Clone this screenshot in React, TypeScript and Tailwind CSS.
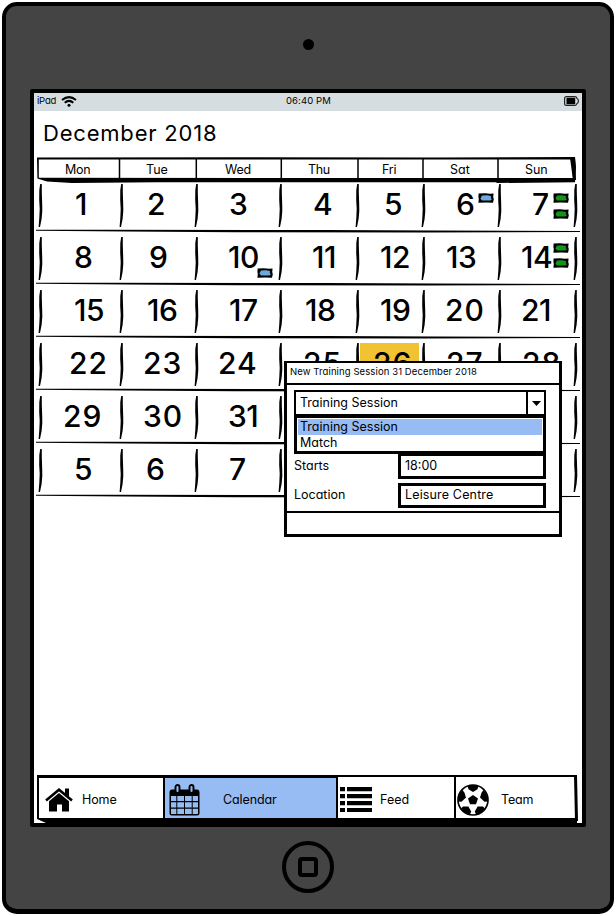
import React from "react";

type Day = { n: string; pad: number; tight?: boolean; today?: boolean };

const COLS = "grid grid-cols-[81px_75px_84px_77px_66px_76px_76px_8px]";

const d = (n: string, pad: number, tight = false, today = false): Day => ({ n, pad, tight, today });

const WEEKS: Day[][] = [
  [d("1", 38), d("2", 29), d("3", 36), d("4", 36), d("5", 30), d("6", 36), d("7", 36)],
  [d("8", 37), d("9", 31), d("10", 35, true), d("11", 35, true), d("12", 26, true), d("13", 26, true), d("14", 25, true)],
  [d("15", 37, true), d("16", 29, true), d("17", 36, true), d("18", 28, true), d("19", 26, true), d("20", 25), d("21", 25, true)],
  [d("22", 32), d("23", 25), d("24", 25), d("25", 26), d("26", 19, false, true), d("27", 26), d("28", 26)],
  [d("29", 26), d("30", 25), d("31", 35, true), d("", 0), d("", 0), d("", 0), d("", 0)],
  [d("5", 37), d("6", 28), d("7", 36), d("", 0), d("", 0), d("", 0), d("", 0)],
];

const MARKS: Record<string, { color: string; place: string }[]> = {
  "0-5": [{ color: "#6fa8dc", place: "left-[58px] top-[14px]" }],
  "0-6": [
    { color: "#109618", place: "left-[57px] top-[14px]" },
    { color: "#109618", place: "left-[57px] top-[30px]" },
  ],
  "1-2": [{ color: "#6fa8dc", place: "left-[64px] top-[36px]" }],
  "1-6": [
    { color: "#109618", place: "left-[57px] top-[11px]" },
    { color: "#109618", place: "left-[57px] top-[26px]" },
  ],
};

function Stroke() {
  return (
    <svg className="mt-[5px] h-[43px] w-[6px] shrink-0" viewBox="0 0 6 43">
      <path d="M3.2 0 L4.8 0 L4.8 8 L5.2 20 L5.3 27 L4.6 35 L3 43 L1.6 43 L2.3 34 L2.7 25 L2.2 16 L2.3 6 Z" />
    </svg>
  );
}

function Mark({ color, place }: { color: string; place: string }) {
  return (
    <svg className={`absolute h-[11px] w-[17px] ${place}`} viewBox="0 0 17 11">
      <path d="M0.6 0.4 L7 0.2 L12 0.8 L15.6 0.6 L15.2 4 L15.8 6.2 L15 9.8 L8 9.6 L0.4 9.8 L0.8 6 L0.4 4 Z" />
      <path d="M4 2.6 L9 2.2 L13 3 L12.8 5 L13.8 6.6 L12.4 7.6 L8 7.4 L4 7.6 L2.4 5.4 Z" fill={color} />
    </svg>
  );
}

function RowLine() {
  return (
    <svg className="absolute bottom-[-1px] left-[-1px] h-[4px] w-[544px]" viewBox="0 0 544 4" preserveAspectRatio="none">
      <path d="M0 0.8 L70 0.7 L290 1 L400 1.6 L544 2 L544 3.1 L390 3.5 L200 3.2 L90 2.5 L0 1.7 Z" />
    </svg>
  );
}

function Calendar() {
  return (
    <div className="ml-[3px] w-[543px]">
      <div className="relative flex h-[26px] w-[539px] text-[12.5px] leading-[22px]">
        <svg className="absolute left-0 top-0 h-[26px] w-[539px]" viewBox="0 0 539 26">
          <path
            fillRule="evenodd"
            d="M0 0.4 L200 0.2 L400 0.6 L538 0 L539 10 L538 25.2 L460 26 L459 25.3 L120 25.3 L35 26 L10 24.6 L0.4 21.6 Z M1.8 2.4 L1.8 20.8 L536 21 L534.5 2.4 Z"
          />
          <path d="M533 1 L538 1 L539 23 L536 23 Z" />
          <path d="M82.5 1V22M159.3 1V22M244.3 1V22M321 1V22M386 1V22M461 1V22" stroke="#000" strokeWidth="1.5" />
        </svg>
        <span className="w-[82px] pl-[28px] pt-[2px] tracking-[-0.3px]">Mon</span>
        <span className="w-[77px] pl-[27px] pt-[2px]">Tue</span>
        <span className="w-[85px] pl-[29px] pt-[2px] tracking-[-0.2px]">Wed</span>
        <span className="w-[77px] pl-[27px] pt-[2px] tracking-[-0.3px]">Thu</span>
        <span className="w-[65px] pl-[24px] pt-[2px] tracking-[-0.2px]">Fri</span>
        <span className="w-[75px] pl-[27px] pt-[2px]">Sat</span>
        <span className="w-[78px] pl-[27px] pt-[2px] tracking-[-0.1px]">Sun</span>
      </div>
      <div className="-mt-[4px]">
        {WEEKS.map((week, r) => (
          <div key={r} className={`relative h-[53px] ${COLS}`}>
            {week.map((day, c) => (
              <div key={c} className="relative flex">
                <Stroke />
                {day.today && <span className="absolute left-[6px] top-[5px] h-[44px] w-[59px] bg-[#f1c232]" />}
                <span
                  className={`relative mt-[6px] -ml-[6px] whitespace-nowrap text-[30px] font-medium leading-[38px] ${day.tight ? "tracking-[-0.5px]" : "tracking-[1px]"}`}
                  style={{ paddingLeft: day.pad }}
                >
                  {day.n}
                </span>
                {(MARKS[`${r}-${c}`] || []).map((m, i) => (
                  <Mark key={i} {...m} />
                ))}
              </div>
            ))}
            <Stroke />
            <RowLine />
          </div>
        ))}
      </div>
    </div>
  );
}

function Dialog() {
  return (
    <div className="absolute left-[250px] top-[268px] flex h-[176px] w-[278px] flex-col border-[3px] border-t-2 border-black bg-white">
      <div className="h-[22px] border-b-2 border-black pl-[3px] text-[9.5px] leading-[18px] tracking-[0.1px]">
        New Training Session 31 December 2018
      </div>
      <div className="relative h-[126px] px-[7px] pt-[5px] text-[12.5px] tracking-[0px]">
        <div className="flex h-[26px] w-[252px] border-2 border-black">
          <span className="flex-1 pl-[4px] leading-[21px]">Training Session</span>
          <span className="flex w-[18px] items-center justify-center border-l-2 border-black">
            <svg className="h-[5px] w-[9px]" viewBox="0 0 9 5">
              <path d="M0 0H9L4.5 5Z" />
            </svg>
          </span>
        </div>
        <div className="h-[38px] w-[252px] border-[3px] border-t-2 border-black px-px pt-px leading-[16px]">
          <div className="h-[16px] bg-[#97bbf3] pl-[2px]">Training Session</div>
          <div className="pl-[2px]">Match</div>
        </div>
        <div className="flex h-[25px] w-[252px] leading-[23px]">
          <span className="w-[104px]">Starts</span>
          <span className="w-[148px] border-[3px] border-t-2 border-black pl-[4px] leading-[20px]">18:00</span>
        </div>
        <div className="mt-[4px] flex h-[25px] w-[252px] leading-[23px]">
          <span className="w-[104px]">Location</span>
          <span className="w-[148px] border-[3px] border-black pl-[4px] leading-[18px] tracking-[0.15px]">Leisure Centre</span>
        </div>
      </div>
      <div className="flex-1 border-t-2 border-black" />
    </div>
  );
}

function HomeIcon() {
  return (
    <svg className="h-[24px] w-[28px]" viewBox="0 0 28 24">
      <path d="M1 12.4 L14 1.8 L27 12.4" fill="none" stroke="#000" strokeWidth="2.6" />
      <path d="M20 0.5H24V9L20 6Z" />
      <path d="M4 13.2 L14 5 L24 13.2 V23.5 H17 V16.5 H12 V23.5 H4 Z" />
    </svg>
  );
}

function CalendarIcon() {
  return (
    <svg className="h-[32px] w-[31px]" viewBox="0 0 31 32">
      <path d="M3 5.5H28Q30.5 5.5 30.5 8.5V29Q30.5 31.5 28 31.5H3Q0.5 31.5 0.5 29V8.5Q0.5 5.5 3 5.5Z" />
      <path
        fill="#97bbf3"
        d="M2 12H7.3V17H2ZM8.3 12H15V17H8.3ZM16 12H22.7V17H16ZM23.7 12H29V17H23.7ZM2 18.2H7.3V23.6H2ZM8.3 18.2H15V23.6H8.3ZM16 18.2H22.7V23.6H16ZM23.7 18.2H29V23.6H23.7ZM2 24.8H7.3V30H2ZM8.3 24.8H15V30H8.3ZM16 24.8H22.7V30H16ZM23.7 24.8H29V30H23.7Z"
      />
      <rect x="6.5" y="1" width="4" height="8" rx="2" fill="#97bbf3" stroke="#000" strokeWidth="1.9" />
      <rect x="20.5" y="1" width="4" height="8" rx="2" fill="#97bbf3" stroke="#000" strokeWidth="1.9" />
    </svg>
  );
}

function ListIcon() {
  return (
    <svg className="h-[25px] w-[32px]" viewBox="0 0 32 25">
      <path d="M0 0H5V4.3H0ZM7 0H32V4.3H7ZM0 7H5V11.3H0ZM7 7H32V11.3H7ZM0 14H5V18.3H0ZM7 14H32V18.3H7ZM0 21H5V25H0ZM7 21H32V25H7Z" />
    </svg>
  );
}

function BallIcon() {
  return (
    <svg className="h-[32px] w-[32px]" viewBox="0 0 32 32">
      <circle cx="16" cy="16" r="15" fill="#fff" stroke="#000" strokeWidth="1.7" />
      <path d="M16 11 L21 14.6 L19 20.3 H13 L11 14.6 Z" />
      <path d="M10.5 2 Q16 0 21.5 2 L20.5 5.3 L16 8 L11.5 5.3 Z" />
      <path d="M26.5 6 Q31 11 30.8 17.5 L27.5 17.8 L23 13.6 L24.6 8.6 Z" />
      <path d="M5.5 6 Q1 11 1.2 17.5 L4.5 17.8 L9 13.6 L7.4 8.6 Z" />
      <path d="M28 24.5 Q24.5 29.3 19 30.6 L17.8 27.5 L20.6 22.6 L26 22.4 Z" />
      <path d="M4 24.5 Q7.5 29.3 13 30.6 L14.2 27.5 L11.4 22.6 L6 22.4 Z" />
    </svg>
  );
}

function Tabs() {
  return (
    <div className="relative ml-[3px] flex h-[48px] w-[542px] text-[12.5px]">
      <div className="flex w-[128px] items-center border-y-[3px] border-b-[5px] border-l-2 border-r-2 border-black">
        <span className="ml-[6px] mt-[4px]"><HomeIcon /></span>
        <span className="ml-[9px] mt-[5px] tracking-[-0.1px]">Home</span>
      </div>
      <div className="flex w-[173px] items-center border-b-[5px] border-r-2 border-t-[3px] border-black bg-[#97bbf3]">
        <span className="ml-[4px] mt-[4px]"><CalendarIcon /></span>
        <span className="ml-[23px] mt-[5px] tracking-[-0.1px]">Calendar</span>
      </div>
      <div className="flex w-[118px] items-center border-b-[5px] border-r-2 border-t-2 border-black">
        <span className="ml-[2px] mt-[3px]"><ListIcon /></span>
        <span className="ml-[8px] mt-[5px]">Feed</span>
      </div>
      <div className="flex w-[121px] items-center border-b-[5px] border-t-2 border-black">
        <span className="ml-px mt-[4px]"><BallIcon /></span>
        <span className="ml-[12px] mt-[5px] tracking-[-0.2px]">Team</span>
      </div>
      <svg className="absolute right-0 top-0 h-[48px] w-[5px]" viewBox="0 0 5 48">
        <path d="M0 0H3L4 46H1Z" />
      </svg>
      <svg className="absolute bottom-0 left-0 h-[4px] w-[9px]" viewBox="0 0 9 4">
        <path d="M0 0V4H9Z" fill="#fff" />
      </svg>
    </div>
  );
}

export default function App() {
  return (
    <div className="h-[916px] w-[616px] bg-white pl-[2px] pt-[2px] text-black [font-family:Inter,'Liberation_Sans',sans-serif] [font-feature-settings:'cv11']">
      <div className="flex h-[912px] w-[612px] flex-col items-center rounded-[15px] border-4 border-b-[5px] border-black bg-[#444444]">
        <span className="mt-[33px] h-[11px] w-[11px] shrink-0 rounded-full bg-black" />
        <div className="mt-[39px] flex h-[738px] w-[556px] shrink-0 flex-col rounded-[2px] border-4 border-black bg-white">
          <div className="relative flex h-[18px] shrink-0 items-center justify-between bg-[#d6dde0] pb-[2px] pl-[3px] pr-[3px] text-[9.5px]">
            <div className="flex items-center gap-[5px]">
              <span className="tracking-[-0.2px]">iPad</span>
              <svg className="h-[11px] w-[16px]" viewBox="0 0 16 11">
                <path d="M1 4 Q8 -1.8 15 4M3.7 6.7 Q8 3 12.3 6.7" fill="none" stroke="#000" strokeWidth="2" />
                <circle cx="8" cy="9.3" r="1.5" />
              </svg>
            </div>
            <span className="absolute left-[252px] tracking-[0.1px]">06:40 PM</span>
            <svg className="h-[10px] w-[15px]" viewBox="0 0 15 10">
              <path d="M2.5 0.6H11Q12.6 0.6 12.8 2.2Q14.4 2.8 14.4 5Q14.4 7.2 12.8 7.8Q12.6 9.4 11 9.4H2.5Q0.6 9.4 0.6 7.5V2.5Q0.6 0.6 2.5 0.6Z" fill="none" stroke="#222" strokeWidth="1.2" />
              <rect x="2.5" y="1.8" width="8.7" height="6.4" />
            </svg>
          </div>
          <div className="relative flex flex-1 flex-col">
            <h1 className="mb-[5px] ml-[9px] mt-[5px] h-[36px] text-[22px] leading-[34px] tracking-[0.8px]">December 2018</h1>
            <Calendar />
            <div className="absolute left-0 top-[-18px]">
              <Dialog />
            </div>
            <div className="mt-auto">
              <Tabs />
            </div>
          </div>
        </div>
        <div className="mt-[14px] flex h-[52px] w-[52px] shrink-0 items-center justify-center rounded-full border-4 border-black">
          <span className="h-[20px] w-[20px] rounded-[4px] border-4 border-black" />
        </div>
      </div>
    </div>
  );
}
